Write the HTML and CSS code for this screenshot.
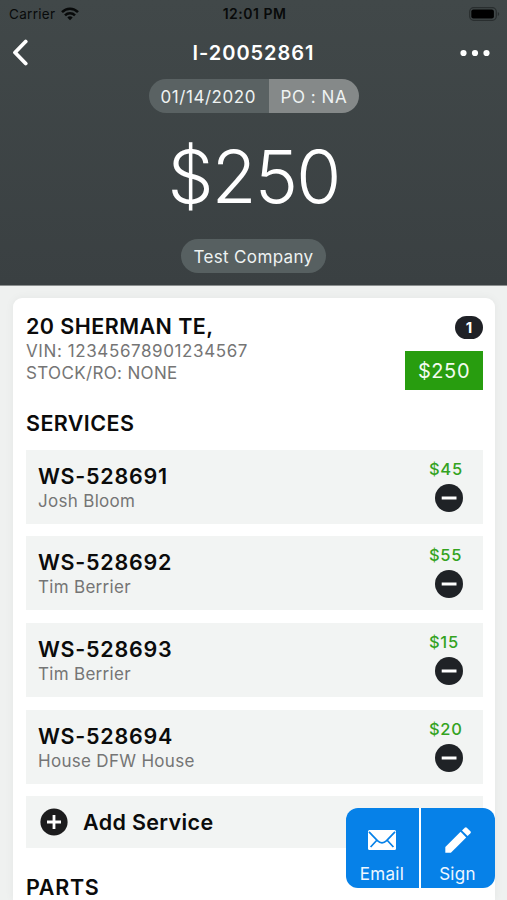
FILE: index.html
```html
<!DOCTYPE html>
<html lang="en">
<head>
    <meta charset="UTF-8">
    <meta name="viewport" content="width=device-width, initial-scale=1.0">
    <title>Invoice I-20052861</title>
    <link rel="stylesheet" href="styles.css">
</head>
<body>
    <header class="header">
        <div class="status-bar">
            <div class="carrier">
                <span>Carrier</span>
                <svg width="18" height="14" viewBox="0 0 18 14" fill="none" stroke="#080a0a" stroke-width="2.5">
                    <path d="M1 5.2C5.5.6 12.5.6 17 5.2"/>
                    <path d="M4 8.3c2.8-2.8 7.2-2.8 10 0"/>
                    <path d="M6.3 10.4c1.6-1.4 3.8-1.4 5.4 0L9 13.2z" fill="#080a0a" stroke="none"/>
                </svg>
            </div>
            <span class="time">12:01 PM</span>
            <div class="battery">
                <svg width="31" height="14" viewBox="0 0 31 14">
                    <rect x=".7" y=".7" width="26.6" height="12.6" rx="4" fill="none" stroke="#292e2f" stroke-width="1.3"/>
                    <rect x="2.3" y="2.5" width="22.6" height="9" rx="2" fill="#000"/>
                    <path d="M28.8 5v4q1.4-.6 1.4-2t-1.4-2z" fill="#292e2f"/>
                </svg>
            </div>
        </div>
        <div class="title-bar">
            <svg width="18" height="28" viewBox="0 0 18 28" fill="none" stroke="#fff" stroke-width="3.8" stroke-linecap="round" stroke-linejoin="round">
                <path d="M14.7 2.5L4 13.5l10.7 11"/>
            </svg>
            <h1>I-20052861</h1>
            <svg width="30" height="8" viewBox="0 0 30 8" fill="#fff">
                <circle cx="3.5" cy="4" r="3.1"/>
                <circle cx="15" cy="4" r="3.1"/>
                <circle cx="26.5" cy="4" r="3.1"/>
            </svg>
        </div>
        <div class="tags">
            <span class="date">01/14/2020</span>
            <span class="po">PO : NA</span>
        </div>
        <div class="total">$250</div>
        <div class="company">Test Company</div>
    </header>

    <main class="card">
        <div class="vehicle">
            <div>
                <h2>20 SHERMAN TE,</h2>
                <p>VIN: 12345678901234567</p>
                <p class="stock">STOCK/RO: NONE</p>
            </div>
            <div class="vehicle-right">
                <span class="count">1</span>
                <span class="amount">$250</span>
            </div>
        </div>

        <h3>SERVICES</h3>
        <div class="services">
            <div class="service">
                <div>
                    <h4>WS-528691</h4>
                    <p>Josh Bloom</p>
                </div>
                <div class="service-right">
                    <span>$45</span>
                    <svg width="28" height="28" viewBox="0 0 28 28">
                        <circle cx="14" cy="14" r="14" fill="#1f2226"/>
                        <path d="M6.7 14h14.8" stroke="#fff" stroke-width="3"/>
                    </svg>
                </div>
            </div>
            <div class="service">
                <div>
                    <h4>WS-528692</h4>
                    <p>Tim Berrier</p>
                </div>
                <div class="service-right">
                    <span>$55</span>
                    <svg width="28" height="28" viewBox="0 0 28 28">
                        <circle cx="14" cy="14" r="14" fill="#1f2226"/>
                        <path d="M6.7 14h14.8" stroke="#fff" stroke-width="3"/>
                    </svg>
                </div>
            </div>
            <div class="service">
                <div>
                    <h4>WS-528693</h4>
                    <p>Tim Berrier</p>
                </div>
                <div class="service-right">
                    <span>$15</span>
                    <svg width="28" height="28" viewBox="0 0 28 28">
                        <circle cx="14" cy="14" r="14" fill="#1f2226"/>
                        <path d="M6.7 14h14.8" stroke="#fff" stroke-width="3"/>
                    </svg>
                </div>
            </div>
            <div class="service">
                <div>
                    <h4>WS-528694</h4>
                    <p>House DFW House</p>
                </div>
                <div class="service-right">
                    <span>$20</span>
                    <svg width="28" height="28" viewBox="0 0 28 28">
                        <circle cx="14" cy="14" r="14" fill="#1f2226"/>
                        <path d="M6.7 14h14.8" stroke="#fff" stroke-width="3"/>
                    </svg>
                </div>
            </div>
            <div class="add-service">
                <svg width="28" height="28" viewBox="0 0 28 28">
                    <circle cx="14" cy="14" r="13.6" fill="#1c1c1d"/>
                    <path d="M7 14h14M14 7v14" stroke="#fff" stroke-width="2.8"/>
                </svg>
                <span>Add Service</span>
            </div>
        </div>

        <h3 class="parts">PARTS</h3>
    </main>

    <!-- Floating actions -->
    <div class="actions">
        <button class="action">
            <svg width="28" height="20" viewBox="0 0 28 20">
                <rect width="28" height="20" rx="1.5" fill="#fff"/>
                <path d="M1 1.8l8.4 8.8q4.6 4.4 9.2 0L27 1.8M2.6 17l6.2-6.8M25.4 17l-6.2-6.8" fill="none" stroke="#0681e8" stroke-width="1.7"/>
            </svg>
            <span>Email</span>
        </button>
        <button class="action">
            <svg width="26" height="26" viewBox="0 0 26 26" fill="#fff">
                <path d="M.3 25.7v-5.6L15.6 4.8l5.6 5.6L5.9 25.7z"/>
                <path d="M17 3.4L19.8.7q1-.9 2 0l3.6 3.6q.9 1 0 2L22.6 9z"/>
            </svg>
            <span>Sign</span>
        </button>
    </div>
</body>
</html>
```

FILE: styles.css
```css
* {
  box-sizing: border-box;
  margin: 0;
  padding: 0;
}

body {
  font-family: Inter, "Liberation Sans", sans-serif;
  background-color: #eff1f0;
  color: #0b0b0b;
  height: 900px;
  overflow: hidden;
}

svg {
  display: block;
  flex: none;
}

/* Header */
.header {
  height: 286px;
  background: linear-gradient(#414849, #3a4042);
  border-bottom: 1px solid #8b8f8f;
  color: #fff;
  display: flex;
  flex-direction: column;
  align-items: center;
}

.status-bar {
  width: 100%;
  height: 27px;
  padding: 0 7px 0 9px;
  display: grid;
  grid-template-columns: 1fr auto 1fr;
  align-items: center;
  color: #080a0a;
  font-size: 13.5px;
  line-height: 28px;
}

.carrier {
  display: flex;
  align-items: center;
  gap: 6px;
  letter-spacing: 0.3px;
}

.time {
  font-size: 14px;
  font-weight: 600;
  letter-spacing: 0.5px;
}

.battery {
  display: flex;
  justify-content: flex-end;
}

.title-bar {
  width: 100%;
  height: 50px;
  padding: 0 17px 0 11px;
  display: grid;
  grid-template-columns: 36px 1fr 30px;
  align-items: center;
  text-align: center;
}

.title-bar svg {
  margin-top: 1px;
}

h1 {
  font-size: 20px;
  line-height: 50px;
  padding-top: 1px;
  font-weight: 600;
  letter-spacing: 0.95px;
}

.tags {
  margin-top: 2px;
  height: 34px;
  display: flex;
  border-radius: 17px;
  overflow: hidden;
  font-size: 17px;
  line-height: 36px;
  letter-spacing: 0.55px;
  color: #eef2f2;
}

.date {
  width: 120px;
  padding-left: 12px;
  background-color: #5a6263;
}

.po {
  width: 90px;
  padding-left: 12px;
  background-color: #858989;
}

.total {
  margin-top: 19px;
  height: 90px;
  font-size: 73px;
  line-height: 90px;
  font-weight: 300;
  letter-spacing: -1.8px;
}

.company {
  margin-top: 17px;
  height: 34px;
  padding: 0 12px;
  border-radius: 17px;
  background-color: #576061;
  color: #eef2f2;
  font-size: 17px;
  line-height: 36px;
  letter-spacing: 0.35px;
}

/* Card */
.card {
  margin: 12px 12px 0 13px;
  height: 602px;
  padding: 13px 12px 0 13px;
  background-color: #fff;
  border-radius: 9px 9px 0 0;
  box-shadow: 0 0 10px rgba(0, 0, 0, 0.05);
}

.vehicle {
  display: flex;
  justify-content: space-between;
}

h2 {
  font-size: 21.5px;
  line-height: 30px;
  font-weight: 600;
  letter-spacing: 0.45px;
}

.vehicle p {
  margin-top: -1px;
  color: #757575;
  font-size: 17px;
  line-height: 23px;
  letter-spacing: 0.6px;
}

.vehicle .stock {
  letter-spacing: 0.35px;
}

.vehicle-right {
  display: flex;
  flex-direction: column;
  align-items: flex-end;
  gap: 12px;
  padding-top: 5px;
}

.count {
  width: 28px;
  height: 23px;
  border-radius: 12px;
  background-color: #1f2126;
  color: #fff;
  font-size: 15px;
  line-height: 23px;
  font-weight: 700;
  text-align: center;
}

.amount {
  width: 78px;
  height: 39px;
  background-color: #289d0f;
  color: #f3fbf0;
  font-size: 20px;
  line-height: 40px;
  letter-spacing: 0.6px;
  text-align: center;
}

h3 {
  margin: 20px 0 13.5px;
  font-size: 21.5px;
  line-height: 26px;
  font-weight: 600;
  letter-spacing: 0.4px;
}

.services {
  display: flex;
  flex-direction: column;
  gap: 12.7px;
}

.service {
  height: 74px;
  padding: 12px 19px 0 12px;
  background-color: #f2f4f3;
  display: flex;
  justify-content: space-between;
}

h4 {
  font-size: 21.5px;
  line-height: 28px;
  font-weight: 600;
  letter-spacing: 0.75px;
}

.service p {
  color: #757575;
  font-size: 17px;
  line-height: 22px;
  letter-spacing: 0.3px;
}

.service-right {
  width: 35px;
  color: #34a31f;
  font-size: 16.5px;
  line-height: 14px;
  font-weight: 450;
  letter-spacing: 0.7px;
}

.service-right svg {
  margin: 8px 0 0 6px;
}

.add-service {
  height: 52px;
  padding-left: 14px;
  background-color: #f2f4f3;
  display: flex;
  align-items: center;
  gap: 15px;
  font-size: 21.5px;
  font-weight: 600;
  letter-spacing: 0.35px;
}

.parts {
  margin: 26px 0 0;
  letter-spacing: 0.7px;
}

/* Floating buttons over the list */
.actions {
  position: absolute;
  left: 346px;
  top: 808px;
  width: 149px;
  height: 80px;
  display: grid;
  grid-template-columns: 73px 74px;
  gap: 2px;
  background-color: #fff;
  border-radius: 12px;
  overflow: hidden;
}

.action {
  border: none;
  background-color: #0681e8;
  color: #eef7ff;
  font-family: inherit;
  font-size: 17px;
  line-height: 20px;
  letter-spacing: 0.3px;
  display: flex;
  flex-direction: column;
  align-items: center;
  justify-content: flex-end;
  gap: 14px;
  padding: 0 1px 4px 0;
}

.action + .action svg {
  margin-bottom: -3px;
}
```
